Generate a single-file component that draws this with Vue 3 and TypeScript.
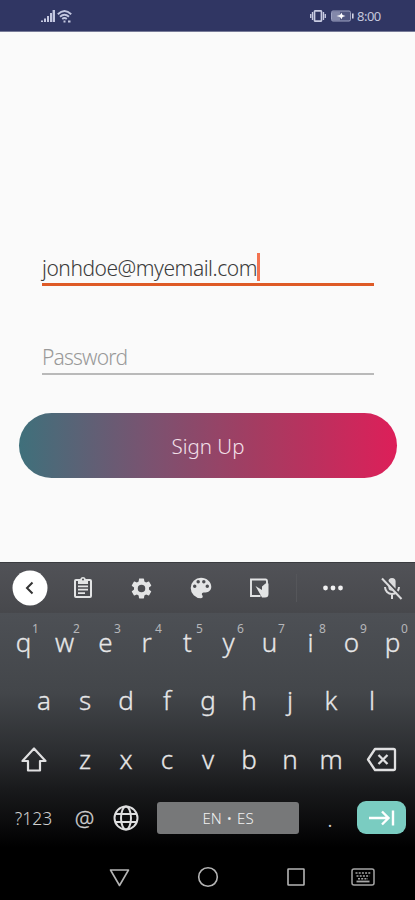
<script setup lang="ts">
interface NumberedKey {
  letter: string
  digit: string
}

const topRow: NumberedKey[] = [...'qwertyuiop'].map((letter, i) => ({
  letter,
  digit: String((i + 1) % 10),
}))
const homeRow: string[] = [...'asdfghjkl']
const bottomRow: string[] = [...'zxcvbnm']
const email = 'jonhdoe@myemail.com'
</script>

<template>
  <div class="phone">
    <header class="status">
      <div class="status-left">
        <svg width="14" height="13" viewBox="0 0 14 13" fill="#c3c7e0">
          <path d="M0 10.500h2V12H0zM3 8.500h2V12H3zM6 6h2v6H6zM9 3h2v9H9zM11.600 0H14v12h-2.400z" />
        </svg>
        <svg width="15" height="13" viewBox="0 0 15 13" fill="none" stroke="#c3c7e0" stroke-width="1.900">
          <path d="M.8 4.200Q7.500-2.200 14.200 4.200M3 6.700Q7.500 2.600 12 6.700M5.200 8.900Q7.500 7 9.800 8.900" />
          <path d="M6.500 11.500h2M11 11.500h2.500" stroke-width="2" />
        </svg>
      </div>
      <div class="status-right">
        <svg width="16" height="12" viewBox="0 0 16 12" fill="none" stroke="#c9cce2" stroke-width="1.700">
          <rect x="4.500" y=".8" width="7" height="10.400" rx="1" />
          <path d="M2.500 2v8M13.500 2v8M.7 4v4M15.300 4v4" stroke-width="1.300" />
        </svg>
        <svg class="battery" width="23" height="12" viewBox="0 0 23 12">
          <rect x=".5" y="1" width="19" height="10" rx="1.500" fill="#4f557f" stroke="#9da2c2" />
          <rect x="1" y="1.500" width="8" height="9" fill="#8388aa" />
          <path d="M21 3.500h1.600v5H21z" fill="#d5d7e6" />
          <path d="M5.500 6l3.500-1L10.500 2.800l1 2.200 3 1-3 1-1 2.200L9 7z" fill="#fff" />
        </svg>
        <span class="clock">8:00</span>
      </div>
    </header>

    <main class="form">
      <div class="field active">
        <span class="value">{{ email }}</span><span class="caret"></span>
      </div>
      <div class="field">
        <span class="placeholder">Password</span>
      </div>
      <button class="signup" type="button">Sign Up</button>
    </main>

    <section class="keyboard">
      <div class="tools">
        <span class="tool back">
          <svg width="36" height="36" viewBox="0 0 36 36">
            <circle cx="18" cy="18" r="17.500" fill="#fff" />
            <path d="M20.500 12.500L15 18l5.500 5.500" fill="none" stroke="#333" stroke-width="2" />
          </svg>
        </span>
        <span class="tool">
          <svg width="24" height="24" viewBox="0 0 24 24" fill="#e3e4e5">
            <path d="M19 3h-4.200a3 3 0 0 0-5.600 0H5a2 2 0 0 0-2 2v15a2 2 0 0 0 2 2h14a2 2 0 0 0 2-2V5a2 2 0 0 0-2-2zm-7-.5a1 1 0 1 1 0 2 1 1 0 0 1 0-2zM19 20H5V5h2v3h10V5h2z" />
            <path d="M7 9.500h10v1.800H7zM7 12.800h10v1.800H7zM7 16.200h7V18H7z" />
          </svg>
        </span>
        <span class="tool">
          <svg width="25" height="25" viewBox="0 0 24 24" fill="#e3e4e5">
            <path d="M19.140 12.940c.04-.3.060-.61.060-.94s-.02-.64-.07-.94l2.030-1.580a.49.49 0 0 0 .12-.61l-1.920-3.320a.488.488 0 0 0-.59-.22l-2.390.96c-.5-.38-1.030-.7-1.620-.94l-.36-2.540a.484.484 0 0 0-.48-.41h-3.840c-.24 0-.43.170-.47.410l-.36 2.540c-.59.240-1.130.570-1.620.94l-2.390-.96a.488.488 0 0 0-.59.220L2.740 8.870c-.12.210-.08.470.12.610l2.030 1.580c-.05.3-.09.630-.09.940s.02.640.070.940l-2.030 1.580a.49.49 0 0 0-.12.610l1.920 3.320c.12.220.370.290.590.220l2.390-.96c.5.380 1.030.7 1.620.94l.36 2.540c.050.240.24.410.48.410h3.840c.24 0 .44-.17.470-.41l.36-2.540c.59-.24 1.130-.56 1.620-.94l2.390.96c.22.080.47 0 .59-.22l1.920-3.320a.49.49 0 0 0-.12-.61zM12 15.600a3.600 3.600 0 1 1 0-7.200 3.600 3.600 0 0 1 0 7.200z" />
          </svg>
        </span>
        <span class="tool">
          <svg width="26" height="26" viewBox="0 0 24 24" fill="#e3e4e5">
            <path d="M12 2.500a9.500 9.500 0 0 0 0 19c.9 0 1.600-.7 1.600-1.600 0-.4-.2-.8-.4-1.100-.3-.3-.4-.7-.4-1.100 0-.9.7-1.600 1.600-1.600h1.900c2.900 0 5.200-2.400 5.200-5.300 0-4.600-4.300-8.300-9.500-8.300zM6.200 12a1.600 1.600 0 1 1 0-3.200 1.600 1.600 0 0 1 0 3.200zm3.200-4.200a1.600 1.600 0 1 1 0-3.200 1.600 1.600 0 0 1 0 3.200zm5.200 0a1.600 1.600 0 1 1 0-3.200 1.600 1.600 0 0 1 0 3.200zm3.200 4.200a1.600 1.600 0 1 1 0-3.200 1.600 1.600 0 0 1 0 3.200z" />
          </svg>
        </span>
        <span class="tool note">
          <svg width="22" height="22" viewBox="0 0 22 22" fill="none" stroke="#e3e4e5" stroke-width="1.900">
            <path d="M12.500 19H3V2.500h14.500q1.500 0 1.500 2V10" />
            <path d="M7.500 9l6.500 4V9.500l3.500-3h3V17q0 3.500-3.500 3.500h-3z" fill="#e3e4e5" stroke="none" />
          </svg>
        </span>
        <span class="divider"></span>
        <span class="tool more">
          <svg width="20" height="6" viewBox="0 0 20 6" fill="#f0f0f1">
            <circle cx="2.500" cy="3" r="2.400" /><circle cx="10" cy="3" r="2.400" /><circle cx="17.500" cy="3" r="2.400" />
          </svg>
        </span>
        <span class="tool mic">
          <svg width="24" height="25" viewBox="0 0 24 25">
            <path d="M12 2a3.600 3.600 0 0 1 3.600 3.600v5.600A3.600 3.600 0 0 1 12 14.800a3.600 3.600 0 0 1-3.600-3.600V5.600A3.600 3.600 0 0 1 12 2z" fill="#dcdcde" />
            <path d="M5 11a7 7 0 0 0 14 0M12 18v5" fill="none" stroke="#dcdcde" stroke-width="2" />
            <path d="M3.500 1.500l19 20" stroke="#4a4b4f" stroke-width="2" />
            <path d="M2 2.500l19.500 20.500" stroke="#dcdcde" stroke-width="2" />
          </svg>
        </span>
      </div>

      <div class="keys">
        <div class="row">
          <span v-for="key in topRow" :key="key.letter" class="key">
            {{ key.letter }}<sup class="digit">{{ key.digit }}</sup>
          </span>
        </div>
        <div class="row home">
          <span v-for="letter in homeRow" :key="letter" class="key">{{ letter }}</span>
        </div>
        <div class="row bottom">
          <span class="key wide">
            <svg class="shift" width="28" height="28" viewBox="0 0 28 28" fill="none" stroke="#e0e0e1" stroke-width="2.200" stroke-linejoin="round">
              <path d="M14 2.500L2.500 15H8v9.500h12V15h5.500z" />
            </svg>
          </span>
          <span v-for="letter in bottomRow" :key="letter" class="key">{{ letter }}</span>
          <span class="key wide">
            <svg class="erase" width="31" height="25" viewBox="0 0 31 25" fill="none" stroke="#e0e0e1" stroke-width="2.300" stroke-linejoin="round">
              <path d="M9 2h18.500a1.500 1.500 0 0 1 1.500 1.500v18a1.500 1.500 0 0 1-1.500 1.500H9l-7-10.500z" />
              <path d="M12.500 8l9 9M21.500 8l-9 9" />
            </svg>
          </span>
        </div>
        <div class="row controls">
          <span class="symbols">?123</span>
          <span class="at">@</span>
          <span class="globe">
            <svg width="26" height="26" viewBox="0 0 26 26" fill="none" stroke="#dededf" stroke-width="2">
              <circle cx="13" cy="13" r="11.500" />
              <ellipse cx="13" cy="13" rx="5" ry="11.500" />
              <path d="M2.500 9h21M2.500 17h21" />
            </svg>
          </span>
          <span class="space">EN • ES</span>
          <span class="dot">.</span>
          <span class="enter">
            <svg width="26" height="16" viewBox="0 0 26 16" fill="none" stroke="#fff" stroke-width="2.400">
              <path d="M0 8h19.500M13 1.500L19.500 8 13 14.500M24 .5v15" />
            </svg>
          </span>
        </div>
      </div>

      <nav class="nav">
        <svg width="21" height="19" viewBox="0 0 21 19" fill="none" stroke="#b5b5b5" stroke-width="1.600" stroke-linejoin="round">
          <path d="M1.500 2h18l-9 15.500z" />
        </svg>
        <svg width="22" height="22" viewBox="0 0 22 22" fill="none" stroke="#b5b5b5" stroke-width="1.600">
          <circle cx="11" cy="11" r="9.300" />
        </svg>
        <svg width="18" height="18" viewBox="0 0 18 18" fill="none" stroke="#b5b5b5" stroke-width="1.600">
          <rect x="1" y="1" width="16" height="16" rx=".5" />
        </svg>
        <svg width="24" height="18" viewBox="0 0 24 18" fill="none" stroke="#a5a5a5" stroke-width="1.500">
          <rect x="1" y="1" width="22" height="16" rx="2" />
          <path d="M4.500 5h15M5.500 8h13" stroke-dasharray="2 1.200" stroke-width="1.600" />
          <path d="M7 10.800h10" stroke-dasharray="2 1.200" />
          <path d="M5.500 13.500h13" stroke-width="1.800" />
        </svg>
      </nav>
    </section>
  </div>
</template>

<style>
body {
  margin: 0;
}
</style>

<style scoped>
.phone {
  display: flex;
  flex-direction: column;
  width: 415px;
  height: 900px;
  overflow: hidden;
  background: #fafafa;
  font-family: "Noto Sans", "Open Sans", sans-serif;
  font-weight: 300;
}
svg {
  display: block;
  flex: none;
}
.status {
  display: flex;
  justify-content: space-between;
  box-sizing: border-box;
  height: 32px;
  padding: 0 32px 0 41px;
  background: #303663;
  border-bottom: 1px solid #777b98;
}
.status-left {
  display: flex;
  gap: 2px;
  padding-top: 10px;
}
.status-right {
  display: flex;
  align-items: center;
  padding-top: 1px;
}
.battery {
  margin-left: 5px;
}
.clock {
  width: 26px;
  margin-left: 3px;
  color: #c4c7dc;
  font-size: 13px;
  font-weight: 400;
  letter-spacing: -0.5px;
}
.form {
  display: flex;
  flex-direction: column;
  height: 530px;
}
.field {
  display: flex;
  box-sizing: border-box;
  height: 36px;
  margin: 53px 41px 0 42px;
  border-bottom: 2px solid #b9b9b9;
  line-height: 37px;
  font-size: 21px;
  letter-spacing: -0.47px;
}
.field.active {
  margin-top: 218px;
  border-bottom: 3px solid #de5a26;
}
.value {
  width: 215px;
  color: #3c3c3c;
  white-space: nowrap;
}
.caret {
  width: 3px;
  height: 28px;
  margin-top: 3px;
  background: #f37350;
}
.placeholder {
  color: #999;
  letter-spacing: -0.8px;
}
.signup {
  height: 65px;
  margin: 38px 18px 0 19px;
  padding: 1px 0 0;
  border: 0;
  border-radius: 33px;
  background: linear-gradient(90deg, #3f707b 0%, #7b5270 35%, #a63b61 64%, #dd1f59 100%);
  color: #f3e0ea;
  font: inherit;
  font-size: 20.500px;
}
.keyboard {
  flex: 1;
  background: #000;
}
.tools {
  display: flex;
  align-items: center;
  box-sizing: border-box;
  height: 51px;
  border-top: 1px solid #3a3c40;
  background: linear-gradient(#515257, #47484c);
}
.tool {
  display: flex;
  justify-content: center;
  width: 59px;
}
.tool.back {
  justify-content: flex-start;
  box-sizing: border-box;
  width: 53px;
  padding-left: 11.500px;
}
.tool.note {
  width: 57px;
}
.divider {
  width: 1px;
  height: 28px;
  margin-left: 9px;
  background: #55565a;
}
.tool.more {
  width: 72px;
}
.tool.mic {
  width: 46px;
}
.keys {
  padding: 0 2px 0 3px;
  background: linear-gradient(#4d5055 0%, #43464a 34%, #2b2d30 60%, #191a1c 75%, #0b0b0c 90%, #000 100%);
}
.row {
  display: flex;
  height: 58.500px;
}
.row.home {
  box-sizing: border-box;
  padding: 0 20.500px 2px;
}
.row.bottom {
  box-sizing: border-box;
  padding-bottom: 1px;
}
.key {
  display: flex;
  position: relative;
  align-items: center;
  justify-content: center;
  width: 41px;
  color: #e6e6e7;
  font-size: 26px;
  -webkit-text-stroke: 0.300px #e6e6e7;
}
.key.wide {
  width: 61.500px;
}
.shift {
  margin-top: 2px;
}
.erase {
  margin-left: -1px;
  margin-top: 2px;
}
.digit {
  position: absolute;
  top: 8px;
  left: 29px;
  color: #b5b6b9;
  font-size: 12px;
  font-weight: 400;
  line-height: 15px;
  -webkit-text-stroke: 0;
}
.controls {
  align-items: center;
  color: #d0d0d0;
}
.symbols {
  width: 61px;
  text-align: center;
  font-size: 17.500px;
}
.at {
  width: 41px;
  text-align: center;
  font-size: 22px;
  -webkit-text-stroke: 0.300px #d0d0d0;
}
.globe {
  display: flex;
  justify-content: center;
  width: 41px;
}
.space {
  width: 142px;
  height: 32px;
  margin-left: 11px;
  border-radius: 3px;
  background: #777879;
  color: #f0f0f0;
  font-size: 15px;
  line-height: 32px;
  text-align: center;
  word-spacing: 1px;
}
.dot {
  width: 62px;
  font-size: 24px;
  text-align: center;
}
.enter {
  display: flex;
  align-items: center;
  justify-content: center;
  width: 49px;
  height: 33px;
  margin-left: -4px;
  border-radius: 9px;
  background: #7accc1;
}
.nav {
  display: flex;
  align-items: center;
  height: 46px;
  padding: 7px 0 0 109px;
}
.nav svg:nth-child(2) {
  margin-left: 67px;
}
.nav svg:nth-child(3) {
  margin-left: 68px;
}
.nav svg:nth-child(4) {
  margin-left: 46px;
}
</style>
